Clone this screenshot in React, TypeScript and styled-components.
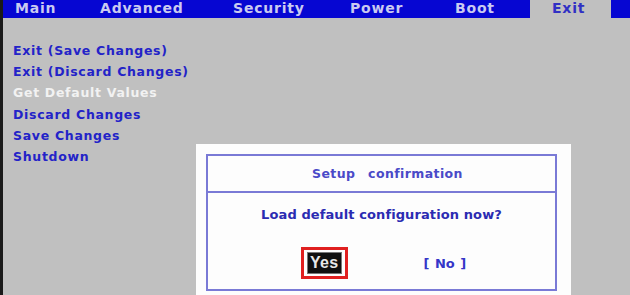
import React from "react";
import styled, { createGlobalStyle } from "styled-components";

const Global = createGlobalStyle`
  html, body { margin: 0; padding: 0; background: #c0c0c0; }
  body { width: 630px; height: 295px; overflow: hidden; }
`;

const Screen = styled.div`
  position: relative;
  width: 630px;
  height: 295px;
  background: #c0c0c0;
  border-left: 3px solid #1a1a1a;
  box-sizing: border-box;
  overflow: hidden;
  font-family: "DejaVu Sans", "Liberation Sans", sans-serif;
`;

const TabBar = styled.div`
  display: flex;
  height: 18px;
  background: #0606d2;
`;

const Tab = styled.div<{ $w: number; $pad: number; $active?: boolean }>`
  width: ${(p) => p.$w}px;
  padding-left: ${(p) => p.$pad}px;
  box-sizing: border-box;
  height: ${(p) => (p.$active ? 19 : 18)}px;
  background: ${(p) => (p.$active ? "#c0c0c0" : "transparent")};
  color: ${(p) => (p.$active ? "#3030c4" : "#cacaf0")};
  font-size: 14px;
  font-weight: 700;
  letter-spacing: 0.8px;
  line-height: 16px;
  white-space: nowrap;
`;

const Menu = styled.ul`
  list-style: none;
  margin: 0;
  padding: 25px 0 0 10px;
  display: flex;
  flex-direction: column;
  gap: 5.2px;
`;

const Item = styled.li<{ $selected?: boolean }>`
  height: 16px;
  line-height: 16px;
  font-size: 12.5px;
  font-weight: 700;
  letter-spacing: 0.7px;
  color: ${(p) => (p.$selected ? "#f2f2f2" : "#2323c8")};
`;

const Dialog = styled.div`
  position: absolute;
  left: 193px;
  top: 144px;
  width: 375px;
  height: 160px;
  background: #fdfdfd;
  padding: 10px 14px 0 10px;
  box-sizing: border-box;
`;

const Frame = styled.div`
  border: 2px solid #7a7ad6;
  height: 137px;
  box-sizing: border-box;
  display: flex;
  flex-direction: column;
`;

const Title = styled.div`
  height: 37px;
  border-bottom: 2px solid #7a7ad6;
  box-sizing: border-box;
  display: flex;
  align-items: center;
  justify-content: center;
  padding-left: 12px;
  color: #4a4ac8;
  font-size: 12.5px;
  font-weight: 700;
  letter-spacing: 0.4px;
  word-spacing: 8px;
`;

const Message = styled.div`
  margin-top: 14px;
  text-align: center;
  color: #2b2bb2;
  font-size: 13px;
  font-weight: 700;
  letter-spacing: 0.1px;
`;

const Buttons = styled.div`
  display: flex;
  align-items: center;
  margin-top: 25px;
  padding-left: 93px;
  gap: 76px;
`;

const YesBox = styled.div`
  border: 3px solid #e02020;
  padding: 2px 3px;
`;

const Yes = styled.div`
  background: #101010;
  color: #e8e8e8;
  font-family: "Liberation Sans", Arial, sans-serif;
  font-size: 16px;
  font-weight: 700;
  line-height: 20px;
  padding: 0 2px;
  letter-spacing: 0.3px;
  border: 1px solid #777;
`;

const No = styled.div`
  color: #3535c8;
  font-size: 13px;
  font-weight: 700;
  word-spacing: 1px;
`;

const tabs = [
  { label: "Main", w: 85, pad: 12 },
  { label: "Advanced", w: 133, pad: 12 },
  { label: "Security", w: 117, pad: 12 },
  { label: "Power", w: 105, pad: 12 },
  { label: "Boot", w: 87, pad: 12 },
  { label: "Exit", w: 81, pad: 22, active: true },
];

const items = [
  "Exit (Save Changes)",
  "Exit (Discard Changes)",
  "Get Default Values",
  "Discard Changes",
  "Save Changes",
  "Shutdown",
];

export default function App() {
  return (
    <>
      <Global />
      <Screen>
        <TabBar>
          {tabs.map((t) => (
            <Tab key={t.label} $w={t.w} $pad={t.pad} $active={t.active}>
              {t.label}
            </Tab>
          ))}
        </TabBar>
        <Menu>
          {items.map((it) => (
            <Item key={it} $selected={it === "Get Default Values"}>
              {it}
            </Item>
          ))}
        </Menu>
        <Dialog>
          <Frame>
            <Title>Setup confirmation</Title>
            <Message>Load default configuration now?</Message>
            <Buttons>
              <YesBox>
                <Yes>Yes</Yes>
              </YesBox>
              <No>[ No ]</No>
            </Buttons>
          </Frame>
        </Dialog>
      </Screen>
    </>
  );
}
